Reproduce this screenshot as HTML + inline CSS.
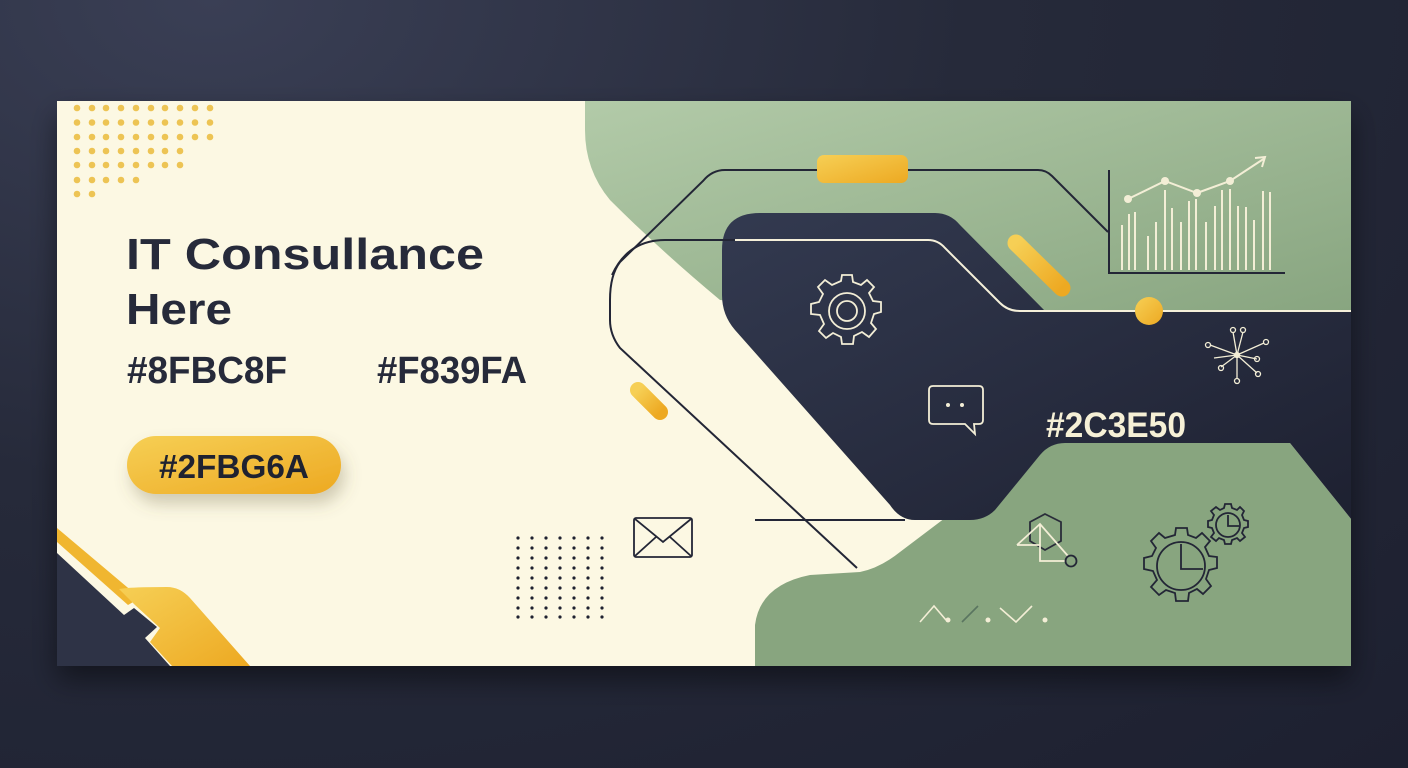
<!DOCTYPE html>
<html><head><meta charset="utf-8"><style>
html,body{margin:0;padding:0;width:1408px;height:768px;overflow:hidden;background:radial-gradient(ellipse at 15% 0%,#3a3f55 0%,#262a3a 45%,#1d2030 100%);}
svg{position:absolute;left:0;top:0}
text{font-family:"Liberation Sans",sans-serif;font-weight:bold}
</style></head><body>
<svg width="1408" height="768" viewBox="0 0 1408 768">
<defs>
<linearGradient id="gy" x1="0" y1="0" x2="1" y2="1"><stop offset="0" stop-color="#f6cf55"/><stop offset="1" stop-color="#eda922"/></linearGradient>
<linearGradient id="gg" x1="0" y1="0" x2="1" y2="1"><stop offset="0" stop-color="#b3cba9"/><stop offset="1" stop-color="#87a47f"/></linearGradient>
<linearGradient id="gd" x1="0" y1="0" x2="1" y2="1"><stop offset="0" stop-color="#333a50"/><stop offset="1" stop-color="#1d2030"/></linearGradient>
<filter id="sh" x="-20%" y="-20%" width="140%" height="160%"><feDropShadow dx="0" dy="14" stdDeviation="14" flood-color="#000" flood-opacity="0.45"/></filter>
<filter id="bs" x="-30%" y="-30%" width="160%" height="180%"><feDropShadow dx="4" dy="10" stdDeviation="8" flood-color="#6b6040" flood-opacity="0.3"/></filter>
<clipPath id="card"><rect x="57" y="101" width="1294" height="565"/></clipPath>
</defs>
<rect x="57" y="101" width="1294" height="565" fill="#fcf8e3" filter="url(#sh)"/>
<g clip-path="url(#card)">
<path d="M585,95 L1360,95 L1360,320 L1040,320 L720,300 Q660,250 610,200 Q585,170 585,130 Z" fill="url(#gg)"/>
<path d="M755,680 L755,625 Q760,585 810,575 L860,572 Q880,568 900,552 L945,518 L1045,443 L1290,443 L1360,530 L1360,680 Z" fill="#88a57f"/>
<path d="M760,213 L935,213 Q950,213 960,225 L1045,311 L1360,311 L1360,530 L1290,443 L1065,443 Q1050,443 1040,455 L995,510 Q985,520 970,520 L915,520 Q900,520 890,505 L735,330 Q722,315 722,295 L722,250 Q722,213 760,213 Z" fill="url(#gd)"/>
<path d="M1108,232 L1052,176 Q1046,170 1038,170 L725,170 Q712,170 703,181 L620,262 Q610,275 610,300 L610,320 Q610,335 620,348 L857,568" fill="none" stroke="#232636" stroke-width="2"/>
<path d="M735,240 L665,240 Q628,240 612,275" fill="none" stroke="#232636" stroke-width="2"/>
<path d="M1351,311 L1020,311 Q1008,311 1000,303 L945,248 Q938,240 928,240 L735,240" fill="none" stroke="#f5f0da" stroke-width="2"/>
<line x1="755" y1="520" x2="905" y2="520" stroke="#232636" stroke-width="2"/>
<rect x="817" y="155" width="91" height="28" rx="7" fill="url(#gy)"/>
<line x1="1016" y1="243" x2="1062" y2="288" stroke="url(#gy)" stroke-width="17" stroke-linecap="round"/>
<line x1="638" y1="390" x2="660" y2="412" stroke="url(#gy)" stroke-width="16" stroke-linecap="round"/>
<circle cx="1149" cy="311" r="14" fill="url(#gy)"/>
<g fill="#edc454">
<g id="r10"><circle cx="77" cy="108" r="3.3"/><circle cx="92" cy="108" r="3.3"/><circle cx="106" cy="108" r="3.3"/><circle cx="121" cy="108" r="3.3"/><circle cx="136" cy="108" r="3.3"/><circle cx="151" cy="108" r="3.3"/><circle cx="165" cy="108" r="3.3"/><circle cx="180" cy="108" r="3.3"/><circle cx="195" cy="108" r="3.3"/><circle cx="210" cy="108" r="3.3"/></g>
<use href="#r10" y="14.5"/><use href="#r10" y="29"/>
<circle cx="77" cy="151" r="3.3"/><circle cx="92" cy="151" r="3.3"/><circle cx="106" cy="151" r="3.3"/><circle cx="121" cy="151" r="3.3"/><circle cx="136" cy="151" r="3.3"/><circle cx="151" cy="151" r="3.3"/><circle cx="165" cy="151" r="3.3"/><circle cx="180" cy="151" r="3.3"/>
<circle cx="77" cy="165" r="3.3"/><circle cx="92" cy="165" r="3.3"/><circle cx="106" cy="165" r="3.3"/><circle cx="121" cy="165" r="3.3"/><circle cx="136" cy="165" r="3.3"/><circle cx="151" cy="165" r="3.3"/><circle cx="165" cy="165" r="3.3"/><circle cx="180" cy="165" r="3.3"/>
<circle cx="77" cy="180" r="3.3"/><circle cx="92" cy="180" r="3.3"/><circle cx="106" cy="180" r="3.3"/><circle cx="121" cy="180" r="3.3"/><circle cx="136" cy="180" r="3.3"/>
<circle cx="77" cy="194" r="3.3"/><circle cx="92" cy="194" r="3.3"/>
</g>
<g fill="#1e2130">
<g id="br"><circle cx="518" cy="538" r="1.6"/><circle cx="532" cy="538" r="1.6"/><circle cx="546" cy="538" r="1.6"/><circle cx="560" cy="538" r="1.6"/><circle cx="574" cy="538" r="1.6"/><circle cx="588" cy="538" r="1.6"/><circle cx="602" cy="538" r="1.6"/></g>
<use href="#br" y="10"/><use href="#br" y="20"/><use href="#br" y="30"/><use href="#br" y="40"/><use href="#br" y="50"/><use href="#br" y="60"/><use href="#br" y="70"/><use href="#br" y="79"/>
</g>
<path d="M57,528 L57,542 L128,605 L140,598 Z" fill="#f0b630"/>
<path d="M119,589 Q130,587 167,587 Q180,587 190,598 L250,666 L172,666 L150,642 L160,628 L135,605 Z" fill="url(#gy)"/>
<path d="M57,553 L124,615 L134,608 L157,627 L145,638 L170,666 L57,666 Z" fill="#2e3346"/>
<rect x="127" y="436" width="214" height="58" rx="29" fill="url(#gy)" filter="url(#bs)"/>
<text x="234" y="478" font-size="33" fill="#1f2230" text-anchor="middle" textLength="150" lengthAdjust="spacingAndGlyphs">#2FBG6A</text>
<text x="126" y="269" font-size="44" fill="#262a3a" textLength="358" lengthAdjust="spacingAndGlyphs">IT Consullance</text>
<text x="126" y="324" font-size="44" fill="#262a3a" textLength="106" lengthAdjust="spacingAndGlyphs">Here</text>
<text x="127" y="383" font-size="38" fill="#262a3a" textLength="160" lengthAdjust="spacingAndGlyphs">#8FBC8F</text>
<text x="377" y="383" font-size="38" fill="#262a3a" textLength="150" lengthAdjust="spacingAndGlyphs">#F839FA</text>
<text x="1046" y="437" font-size="35" fill="#f6f0d6" textLength="140" lengthAdjust="spacingAndGlyphs">#2C3E50</text>
<g stroke="#232636" stroke-width="2" fill="none"><path d="M1109,170 L1109,273 L1285,273"/></g>
<g stroke="#f3eed6" stroke-width="2">
<line x1="1122" y1="270" x2="1122" y2="225"/><line x1="1129" y1="270" x2="1129" y2="214"/><line x1="1135" y1="270" x2="1135" y2="212"/><line x1="1148" y1="270" x2="1148" y2="236"/><line x1="1156" y1="270" x2="1156" y2="222"/><line x1="1165" y1="270" x2="1165" y2="190"/><line x1="1172" y1="270" x2="1172" y2="208"/><line x1="1181" y1="270" x2="1181" y2="222"/><line x1="1189" y1="270" x2="1189" y2="201"/><line x1="1196" y1="270" x2="1196" y2="199"/><line x1="1206" y1="270" x2="1206" y2="222"/><line x1="1215" y1="270" x2="1215" y2="206"/><line x1="1222" y1="270" x2="1222" y2="190"/><line x1="1230" y1="270" x2="1230" y2="189"/><line x1="1238" y1="270" x2="1238" y2="206"/><line x1="1246" y1="270" x2="1246" y2="207"/><line x1="1254" y1="270" x2="1254" y2="220"/><line x1="1263" y1="270" x2="1263" y2="191"/><line x1="1270" y1="270" x2="1270" y2="192"/>
</g>
<g stroke="#f3eed6" stroke-width="2" fill="none"><path d="M1128,199 L1165,181 L1197,193 L1230,181 L1265,158"/><path d="M1255,158 L1265,157 L1262,167"/></g>
<g fill="#f3eed6"><circle cx="1128" cy="199" r="4"/><circle cx="1165" cy="181" r="4"/><circle cx="1197" cy="193" r="4"/><circle cx="1230" cy="181" r="4"/></g>
<g transform="translate(847,311)" fill="none" stroke="#f3eed6" stroke-width="1.8">
<path d="M-5,-36 L5,-36 L6,-29 L14,-26 L20,-31 L27,-24 L22,-18 L26,-10 L34,-9 L34,1 L27,3 L24,12 L29,18 L22,26 L15,21 L7,25 L6,33 L-5,33 L-6,26 L-14,22 L-21,27 L-28,20 L-23,13 L-27,4 L-36,3 L-36,-7 L-28,-9 L-24,-17 L-29,-24 L-22,-31 L-15,-26 L-6,-30 Z"/>
<circle r="18"/><circle r="10"/></g>
<path d="M933,386 L979,386 Q983,386 983,390 L983,420 Q983,424 979,424 L974,424 L975,434 L965,424 L933,424 Q929,424 929,420 L929,390 Q929,386 933,386 Z" fill="none" stroke="#f3eed6" stroke-width="1.8"/>
<circle cx="948" cy="405" r="2" fill="#f3eed6"/><circle cx="962" cy="405" r="2" fill="#f3eed6"/>
<g fill="none" stroke="#232636" stroke-width="1.8"><rect x="634" y="518" width="58" height="39" rx="2"/><path d="M635,519 L663,542 L691,519 M635,556 L656,537 M691,556 L670,537"/></g>
<g stroke="#f3eed6" stroke-width="1.3" fill="none" transform="translate(1237,355)">
<line x1="0" y1="0" x2="-4" y2="-23"/><line x1="0" y1="0" x2="6" y2="-23"/><line x1="0" y1="0" x2="-27" y2="-10"/><line x1="0" y1="0" x2="27" y2="-12"/><line x1="0" y1="0" x2="-23" y2="3"/><line x1="0" y1="0" x2="20" y2="4"/><line x1="0" y1="0" x2="-16" y2="12"/><line x1="0" y1="0" x2="20" y2="18"/><line x1="0" y1="0" x2="0" y2="24"/>
<circle cx="-4" cy="-25" r="2.5"/><circle cx="6" cy="-25" r="2.5"/><circle cx="-29" cy="-10" r="2.5"/><circle cx="29" cy="-13" r="2.5"/><circle cx="20" cy="4" r="2.5"/><circle cx="-16" cy="13" r="2.5"/><circle cx="21" cy="19" r="2.5"/><circle cx="0" cy="26" r="2.5"/><circle r="2.5" fill="#f3eed6"/></g>
<g fill="none" stroke-width="1.8"><path d="M1045,514 L1061,522 L1061,541 L1045,550 L1030,541 L1030,522 Z" stroke="#2a2d3a"/><path d="M1017,545 L1040,524 L1068,556 M1017,545 L1040,545 M1040,524 L1040,561 L1065,561" stroke="#f3eed6"/><circle cx="1071" cy="561" r="5.5" stroke="#232636"/></g>
<g fill="none" stroke="#232636" stroke-width="1.8">
<g transform="translate(1181,566)"><path d="M-5,-38 L6,-38 L7,-31 L15,-28 L21,-33 L29,-25 L24,-19 L28,-10 L36,-9 L36,2 L28,4 L25,13 L30,20 L22,28 L16,23 L8,27 L7,35 L-5,35 L-6,27 L-15,24 L-22,29 L-30,21 L-24,14 L-28,5 L-37,3 L-37,-8 L-29,-10 L-25,-18 L-30,-25 L-22,-33 L-16,-28 L-6,-31 Z"/><circle r="24"/><path d="M0,-22 L0,3 L22,3"/></g>
<g transform="translate(1228,525)"><path d="M-3,-21 L3,-21 L4,-17 L9,-15 L12,-18 L16,-14 L14,-10 L16,-5 L20,-4 L20,2 L16,3 L14,8 L17,12 L12,16 L9,13 L4,15 L3,19 L-3,19 L-4,15 L-9,13 L-12,16 L-17,12 L-14,8 L-16,3 L-20,2 L-20,-4 L-16,-5 L-14,-10 L-17,-14 L-12,-18 L-8,-15 L-4,-17 Z"/><circle r="12"/><path d="M0,-10 L0,1 L11,1"/></g>
</g>
<g stroke="#f3eed6" stroke-width="1.6" fill="none"><path d="M920,622 L934,606 L946,620"/><path d="M962,622 L978,606" stroke="#5a7560"/><path d="M1000,608 L1016,622 L1032,606"/></g>
<g fill="#f3eed6"><circle cx="948" cy="620" r="2.5"/><circle cx="988" cy="620" r="2.5"/><circle cx="1045" cy="620" r="2.5"/></g>
</g>
</svg>
</body></html>
